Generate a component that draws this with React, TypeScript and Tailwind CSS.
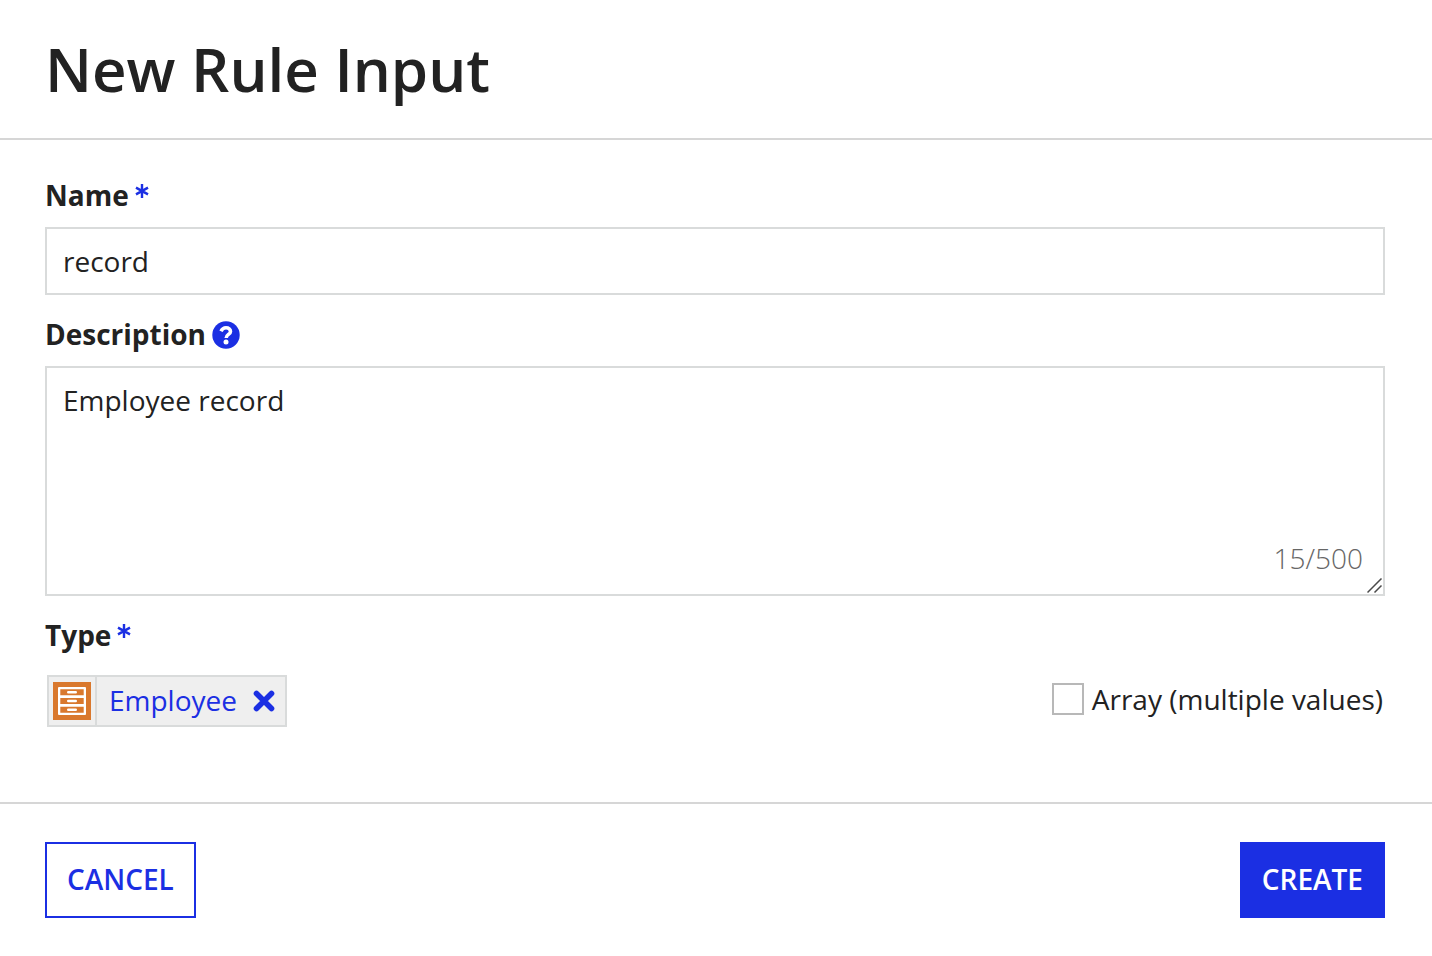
import { useState } from "react";

function Required() {
  return (
    <svg aria-hidden="true" viewBox="0 0 14 14" className="ml-1.5 size-3.5 -translate-y-1" stroke="#1b2fe3" strokeWidth="2.4" fill="none">
      <path d="M7 0v14M1 3.6l12 6.8M13 3.6l-12 6.8" />
    </svg>
  );
}

export default function App() {
  const [name, setName] = useState("record");
  const [description, setDescription] = useState("Employee record");
  const [isArray, setIsArray] = useState(false);
  return (
    <form className="bg-white font-['Open_Sans',sans-serif] text-[28px] leading-10 text-[#222222]" onSubmit={(e) => e.preventDefault()}>
      <header className="border-b-2 border-[#d6d6d6] px-[45px] pt-7 pb-7">
        <h1 className="text-[60px] leading-[82px] font-semibold">New Rule Input</h1>
      </header>
      <main className="flex flex-col pt-[35px] pr-[47px] pb-[75px] pl-[45px]">
        <label htmlFor="name" className="mb-3 flex items-center font-bold">
          Name
          <Required />
        </label>
        <input id="name" required value={name} onChange={(e) => setName(e.target.value)} className="h-[68px] w-full border-2 border-[#d9dbdb] px-4 outline-none" />
        <div className="mt-[19px] mb-3 flex items-center gap-1.5">
          <label htmlFor="description" className="font-bold">Description</label>
          <button type="button" aria-label="Help" className="mt-0.5 size-7">
            <svg viewBox="0 0 28 28" className="size-7" fill="none">
              <circle cx="14" cy="14" r="13.7" fill="#1b2fe3" />
              <path d="M9 10.3C10.1 8 11.7 6.8 14 6.8c2.7 0 4.5 1.5 4.5 3.6 0 3-4.3 3.1-4.3 6.5" stroke="white" strokeWidth="3.6" />
              <circle cx="14" cy="20.9" r="2.5" fill="white" />
            </svg>
          </button>
        </div>
        <div className="relative">
          <textarea id="description" value={description} maxLength={500} onChange={(e) => setDescription(e.target.value)} className="block h-[230px] w-full resize-none border-2 border-[#d9dbdb] px-4 py-3 outline-none" />
          <span className="absolute right-[22px] bottom-[18px] font-light text-[#666666]">{description.length}/500</span>
          <svg aria-hidden="true" viewBox="0 0 16 16" className="absolute right-0.5 bottom-0.5 size-4" stroke="#4a4a4a" strokeWidth="1.5">
            <path d="M.5 14.5L14.5 .5M7.5 14.5L14.5 7.5" />
          </svg>
        </div>
        <div className="mt-[19px] mb-5 flex items-center font-bold">
          Type
          <Required />
        </div>
        <div className="flex items-start justify-between">
          <div className="ml-0.5 flex h-[52px] border-2 border-[#d9dbdb] bg-[#efefef]">
            <span className="flex h-full items-center border-r-2 border-[#d9dbdb] px-1">
              <svg aria-hidden="true" viewBox="0 0 38 38" className="size-[38px]">
                <path fill="#d9782d" d="M0 0h38v38H0z" />
                <rect x="5" y="5" width="28" height="28" rx="1" fill="white" />
                <path fill="#d9782d" d="M7.3 7.3h23.4v6H7.3zM7.3 16h23.4v6H7.3zM7.3 24.7h23.4v6H7.3z" />
                <path stroke="white" strokeWidth="2.4" strokeLinecap="round" d="M15.2 10.3h7.6M15.2 19h7.6M15.2 27.7h7.6" />
              </svg>
            </span>
            <a href="#employee" className="mt-[3px] ml-3 text-[#1b2fe3]">Employee</a>
            <button type="button" aria-label="Remove Employee" className="mr-2.5 ml-4 flex items-center">
              <svg viewBox="0 0 22 22" className="size-[22px]" stroke="#1b2fe3" strokeWidth="5.6" strokeLinecap="round">
                <path d="M3.5 3.5l15 15M18.5 3.5l-15 15" />
              </svg>
            </button>
          </div>
          <label className="mt-1 mr-0.5 flex items-center gap-2">
            <input type="checkbox" checked={isArray} onChange={(e) => setIsArray(e.target.checked)} className="size-8 appearance-none border-2 border-[#b8b8b8] checked:bg-[#1b2fe3]" />
            Array (multiple values)
          </label>
        </div>
      </main>
      <footer className="flex justify-between border-t-2 border-[#d6d6d6] py-[38px] pr-[47px] pl-[45px]">
        <button type="button" className="h-[76px] border-2 border-[#1b2fe3] px-5 pb-0.5 font-semibold text-[#1b2fe3]">CANCEL</button>
        <button type="submit" className="h-[76px] border-2 border-[#1b2fe3] bg-[#1b2fe3] px-5 pb-0.5 font-semibold text-white">CREATE</button>
      </footer>
    </form>
  );
}
